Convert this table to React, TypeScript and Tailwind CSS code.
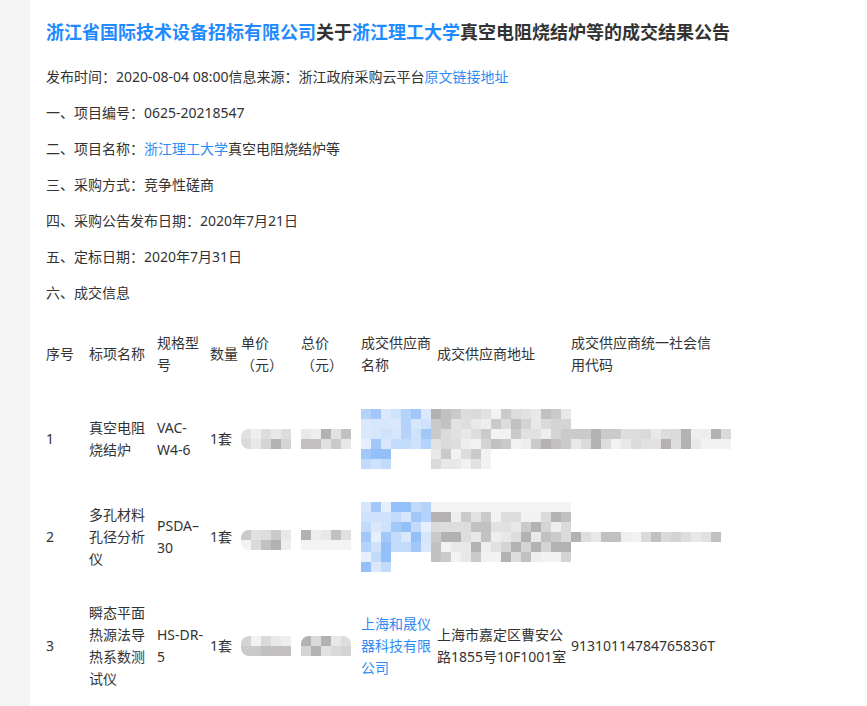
import React from 'react';

const font = "font-[family-name:'Noto_Sans','Noto_Sans_CJK_SC',sans-serif]";

const bluePalette = ['#dbe8fc', '#cfe2fb', '#c3dbfb', '#b4d3fa', '#a2c8f9', '#e6effc', '#93c0f9', '#d6e6fb'];
const grayPalette = ['#f2f2f3', '#e8e8e9', '#dedddd', '#d5d4d5', '#cbcacb', '#c2c0c1', '#e2e1df', '#d9dadc', '#b3b1b2', '#eeeeee'];

// small deterministic generator so the blur blocks look the same every render
function makeRand(seed: number) {
  let s = seed;
  return () => {
    s = (s * 9301 + 49297) % 233280;
    return s / 233280;
  };
}

interface MosaicProps {
  rows: string[];
  seed: number;
  cell?: number;
}

function Mosaic({ rows, seed, cell = 10 }: MosaicProps) {
  const rand = makeRand(seed);
  return (
    <div className="flex w-max flex-col">
      {rows.map((row, i) => (
        <div key={i} className="flex">
          {row.split('').map((c, j) => {
            let bg = 'transparent';
            if (c === 'b') bg = bluePalette[Math.floor(rand() * bluePalette.length)];
            if (c === 'g') bg = grayPalette[Math.floor(rand() * grayPalette.length)];
            if (c === 'l') bg = '#f3f3f4';
            return <div key={j} className="shrink-0" style={{ width: cell, height: cell, background: bg }} />;
          })}
        </div>
      ))}
    </div>
  );
}

const g = (n: number) => 'g'.repeat(n);

const supplier1 = [
  'bbbbbbb' + g(14),
  'bbbbbbb' + g(14),
  'bbbbbbb' + g(30),
  'bbbbbbb' + g(30),
  'bbb....' + g(6),
  'bbb....' + g(6),
];

const supplier2 = [
  'bbbbbbb' + 'l'.repeat(14),
  'bbbbbbb' + g(14),
  'bbbbbbb' + g(14),
  'bbbbbbb' + g(29),
  'bbbbbbb' + g(14),
  'bbb....' + g(14),
  'bbb',
];

const price = (seed: number, rows = 2) => (
  <div className="w-fit overflow-hidden rounded-l-[8px]">
    <Mosaic rows={Array.from({ length: rows }, () => 'ggggg')} seed={seed} />
  </div>
);

const td = 'py-[15px] px-0 align-middle text-left font-normal';

export default function App() {
  return (
    <div className={`flex h-[706px] w-full overflow-hidden bg-white text-[#333333] ${font}`}>
      <div className="w-[30px] shrink-0 bg-[#f5f5f5]" />
      <div className="flex-1 pl-[16px] pt-[18px]">
        <h1 className="text-[18px] font-bold leading-[28px]">
          <span className="text-[#1f8bff]">浙江省国际技术设备招标有限公司</span>关于
          <span className="text-[#1f8bff]">浙江理工大学</span>真空电阻烧结炉等的成交结果公告
        </h1>

        <div className="mt-[19px] text-[14px] leading-[24px]">
          <p className="mb-3">
            发布时间：2020-08-04 08:00信息来源：浙江政府采购云平台
            <a className="text-[#2e8cf5]">原文链接地址</a>
          </p>
          <p className="mb-3">一、项目编号：0625-20218547</p>
          <p className="mb-3">
            二、项目名称：<a className="text-[#2e8cf5]">浙江理工大学</a>真空电阻烧结炉等
          </p>
          <p className="mb-3">三、采购方式：竞争性磋商</p>
          <p className="mb-3">四、采购公告发布日期：2020年7月21日</p>
          <p className="mb-3">五、定标日期：2020年7月31日</p>
          <p className="mb-3">六、成交信息</p>
        </div>

        <table className="mt-[2px] w-[675px] table-fixed border-collapse text-[14px] leading-[22px]">
          <colgroup>
            <col className="w-[43px]" />
            <col className="w-[68px]" />
            <col className="w-[53px]" />
            <col className="w-[31px]" />
            <col className="w-[60px]" />
            <col className="w-[60px]" />
            <col className="w-[76px]" />
            <col className="w-[134px]" />
            <col className="w-[150px]" />
          </colgroup>
          <thead>
            <tr>
              <th className={td}>序号</th>
              <th className={td}>标项名称</th>
              <th className={td}>规格型号</th>
              <th className={td}>数量</th>
              <th className={td}>单价（元）</th>
              <th className={td}>总价（元）</th>
              <th className={td}>成交供应商名称</th>
              <th className={td}>成交供应商地址</th>
              <th className={td}>成交供应商统一社会信用代码</th>
            </tr>
          </thead>
          <tbody>
            <tr className="h-[96px]">
              <td className={td}>1</td>
              <td className={td}>真空电阻烧结炉</td>
              <td className={td}>VAC-W4-6</td>
              <td className={td}>1套</td>
              <td className={td}>{price(11)}</td>
              <td className={td}>
                <Mosaic rows={['ggggg', 'ggggg']} seed={23} />
              </td>
              <td className={`${td} overflow-visible`}>
                <Mosaic rows={supplier1} seed={7} />
              </td>
              <td className={td}></td>
              <td className={td}></td>
            </tr>
            <tr className="h-[96px]">
              <td className={td}>2</td>
              <td className={td}>多孔材料孔径分析仪</td>
              <td className={td}>PSDA–30</td>
              <td className={td}>1套</td>
              <td className={td}>
                <div className="pt-[6px]">{price(31)}</div>
              </td>
              <td className={td}>
                <div className="pt-[6px]">
                  <Mosaic rows={['ggggg', 'lllll']} seed={41} />
                </div>
              </td>
              <td className={`${td} overflow-visible`}>
                <Mosaic rows={supplier2} seed={19} />
              </td>
              <td className={td}></td>
              <td className={td}></td>
            </tr>
            <tr>
              <td className={td}>3</td>
              <td className={td}>瞬态平面热源法导热系数测试仪</td>
              <td className={td}>HS-DR-5</td>
              <td className={td}>1套</td>
              <td className={td}>{price(53)}</td>
              <td className={td}>
                <div className="w-fit overflow-hidden rounded-t-[8px]">
                  <Mosaic rows={['ggggg', 'ggggg']} seed={67} />
                </div>
              </td>
              <td className={td}>
                <a className="text-[#2e8cf5]">上海和晟仪器科技有限公司</a>
              </td>
              <td className={td}>上海市嘉定区曹安公路1855号10F1001室</td>
              <td className={td}>91310114784765836T</td>
            </tr>
          </tbody>
        </table>
      </div>
    </div>
  );
}
